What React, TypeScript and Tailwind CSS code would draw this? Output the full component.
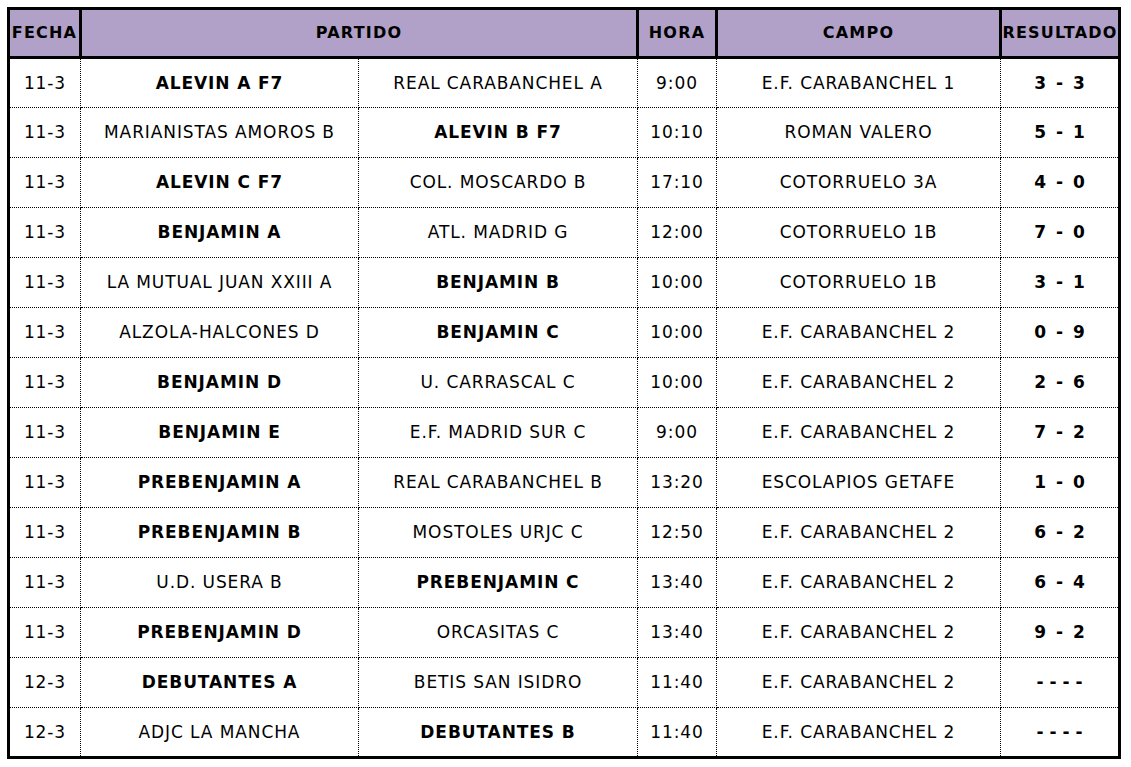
import React from "react";

type Row = {
  fecha: string;
  local: string;
  visitante: string;
  ourSide: "local" | "visitante";
  hora: string;
  campo: string;
  resultado: string;
};

const rows: Row[] = [
  { fecha: "11-3", local: "ALEVIN A F7", visitante: "REAL CARABANCHEL A", ourSide: "local", hora: "9:00", campo: "E.F. CARABANCHEL 1", resultado: "3 - 3" },
  { fecha: "11-3", local: "MARIANISTAS AMOROS B", visitante: "ALEVIN B F7", ourSide: "visitante", hora: "10:10", campo: "ROMAN VALERO", resultado: "5 - 1" },
  { fecha: "11-3", local: "ALEVIN C F7", visitante: "COL. MOSCARDO B", ourSide: "local", hora: "17:10", campo: "COTORRUELO 3A", resultado: "4 - 0" },
  { fecha: "11-3", local: "BENJAMIN A", visitante: "ATL. MADRID G", ourSide: "local", hora: "12:00", campo: "COTORRUELO 1B", resultado: "7 - 0" },
  { fecha: "11-3", local: "LA MUTUAL JUAN XXIII A", visitante: "BENJAMIN B", ourSide: "visitante", hora: "10:00", campo: "COTORRUELO 1B", resultado: "3 - 1" },
  { fecha: "11-3", local: "ALZOLA-HALCONES D", visitante: "BENJAMIN C", ourSide: "visitante", hora: "10:00", campo: "E.F. CARABANCHEL 2", resultado: "0 - 9" },
  { fecha: "11-3", local: "BENJAMIN D", visitante: "U. CARRASCAL C", ourSide: "local", hora: "10:00", campo: "E.F. CARABANCHEL 2", resultado: "2 - 6" },
  { fecha: "11-3", local: "BENJAMIN E", visitante: "E.F. MADRID SUR C", ourSide: "local", hora: "9:00", campo: "E.F. CARABANCHEL 2", resultado: "7 - 2" },
  { fecha: "11-3", local: "PREBENJAMIN A", visitante: "REAL CARABANCHEL B", ourSide: "local", hora: "13:20", campo: "ESCOLAPIOS GETAFE", resultado: "1 - 0" },
  { fecha: "11-3", local: "PREBENJAMIN B", visitante: "MOSTOLES URJC C", ourSide: "local", hora: "12:50", campo: "E.F. CARABANCHEL 2", resultado: "6 - 2" },
  { fecha: "11-3", local: "U.D. USERA B", visitante: "PREBENJAMIN C", ourSide: "visitante", hora: "13:40", campo: "E.F. CARABANCHEL 2", resultado: "6 - 4" },
  { fecha: "11-3", local: "PREBENJAMIN D", visitante: "ORCASITAS C", ourSide: "local", hora: "13:40", campo: "E.F. CARABANCHEL 2", resultado: "9 - 2" },
  { fecha: "12-3", local: "DEBUTANTES A", visitante: "BETIS SAN ISIDRO", ourSide: "local", hora: "11:40", campo: "E.F. CARABANCHEL 2", resultado: "----" },
  { fecha: "12-3", local: "ADJC LA MANCHA", visitante: "DEBUTANTES B", ourSide: "visitante", hora: "11:40", campo: "E.F. CARABANCHEL 2", resultado: "----" },
];

const th = "border-[3px] border-black bg-[#b1a0c7] text-[16px] tracking-[1.2px] font-bold text-center p-0";
const td = "border border-dotted border-black text-center p-0 whitespace-nowrap";

export default function App() {
  return (
    <div className="bg-white min-h-[767px] p-[7px] text-black font-['DejaVu_Sans',sans-serif]">
      <table className="w-[1114px] table-fixed border-collapse border-[3px] border-black text-[17px] tracking-[0.9px] leading-none">
        <colgroup>
          <col className="w-[72px]" />
          <col className="w-[278px]" />
          <col className="w-[279px]" />
          <col className="w-[79px]" />
          <col className="w-[284px]" />
          <col className="w-[119px]" />
        </colgroup>
        <thead>
          <tr className="h-[49px]">
            <th className={th}>FECHA</th>
            <th className={th} colSpan={2}>PARTIDO</th>
            <th className={th}>HORA</th>
            <th className={th}>CAMPO</th>
            <th className={th}>RESULTADO</th>
          </tr>
        </thead>
        <tbody>
          {rows.map((r, i) => (
            <tr key={i} className="h-[50px]">
              <td className={td}>{r.fecha}</td>
              <td className={`${td} ${r.ourSide === "local" ? "font-bold" : ""}`}>{r.local}</td>
              <td className={`${td} ${r.ourSide === "visitante" ? "font-bold" : ""}`}>{r.visitante}</td>
              <td className={td}>{r.hora}</td>
              <td className={td}>{r.campo}</td>
              <td
                className={`${td} font-bold ${
                  r.resultado === "----" ? "tracking-[6px] pl-[6px]" : "tracking-[2px] pl-[2px]"
                }`}
              >
                {r.resultado}
              </td>
            </tr>
          ))}
        </tbody>
      </table>
    </div>
  );
}
